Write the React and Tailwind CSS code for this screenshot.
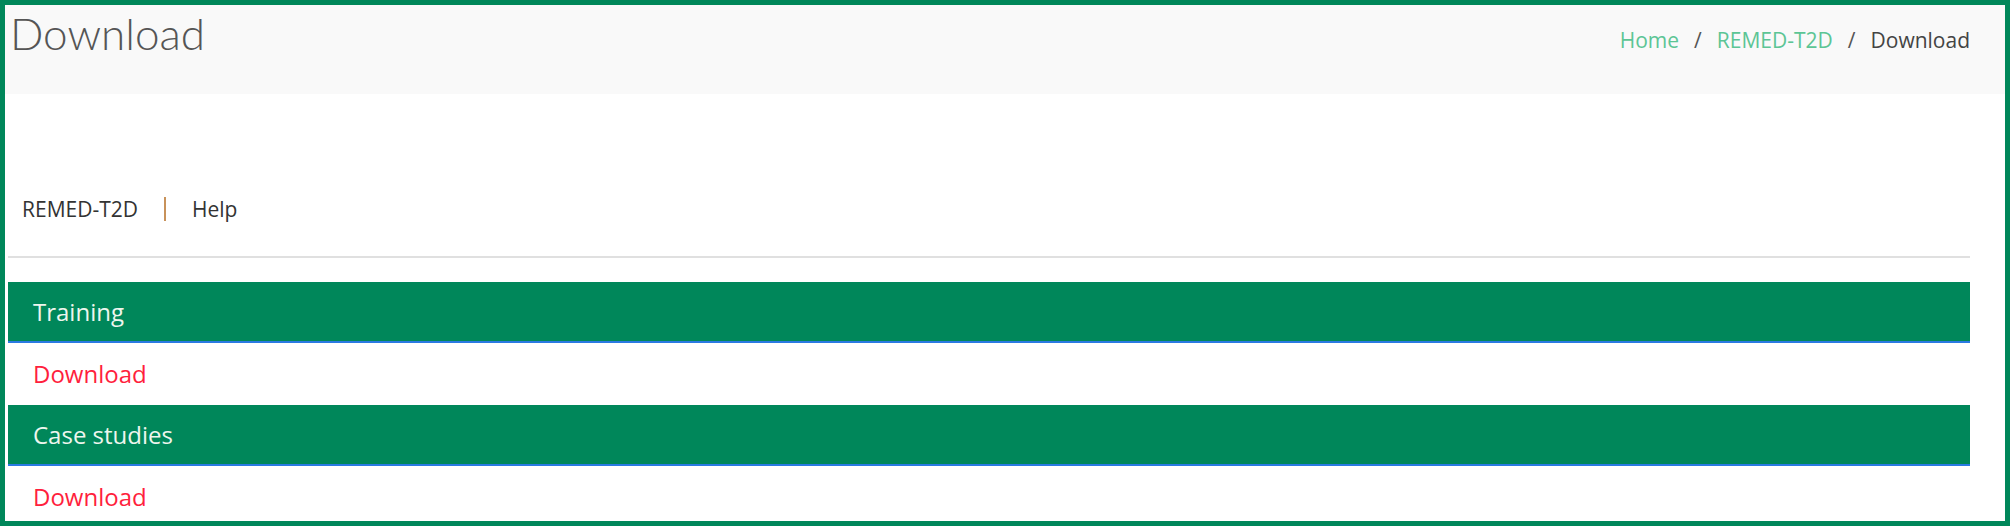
export default function App() {
  return (
    <div className="box-border h-[526px] w-[2010px] overflow-hidden border-[5px] border-[#00875a] bg-white" style={{ fontFamily: '"Open Sans", "Noto Sans", sans-serif' }}>
      <div className="flex h-[89px] items-start justify-between bg-[#f9f9f9]">
        <h1 className="pl-[5px] pt-[2px] text-[44px] font-light leading-[52px] text-[#555]" style={{ fontFamily: 'Lato, "Open Sans", sans-serif' }}>
          Download
        </h1>
        <div className="flex items-center pr-[35px] pt-[21px] text-[21px] leading-[28px]">
          <span className="text-[#5cc595]">Home</span>
          <span className="px-[15px] text-[#555]">/</span>
          <span className="text-[#5cc595]">REMED-T2D</span>
          <span className="px-[15px] text-[#555]">/</span>
          <span className="text-[#444]">Download</span>
        </div>
      </div>
      <div className="ml-[3px] mr-[35px]">
        <div className="flex items-center pl-[14px] pt-[101px] text-[21px] leading-[28px] text-[#333]">
          <span>REMED-T2D</span>
          <span className="mx-[26px] inline-block h-[24px] w-[2px] bg-[#c8925a]"></span>
          <span>Help</span>
        </div>
        <div className="mt-[33px] h-[2px] bg-[#e0e0e0]"></div>
        <div className="mt-[24px] flex h-[61px] items-center border-b-2 border-[#2a7ae2] bg-[#00875a] pl-[25px] text-[24px] text-[#eef6ee]">
          Training
        </div>
        <div className="flex h-[62px] items-center pl-[25px] text-[24px] text-[#ff1f3d]">Download</div>
        <div className="flex h-[61px] items-center border-b-2 border-[#2a7ae2] bg-[#00875a] pl-[25px] text-[24px] text-[#eef6ee]">
          Case studies
        </div>
        <div className="flex h-[62px] items-center pl-[25px] text-[24px] text-[#ff1f3d]">Download</div>
      </div>
    </div>
  );
}
